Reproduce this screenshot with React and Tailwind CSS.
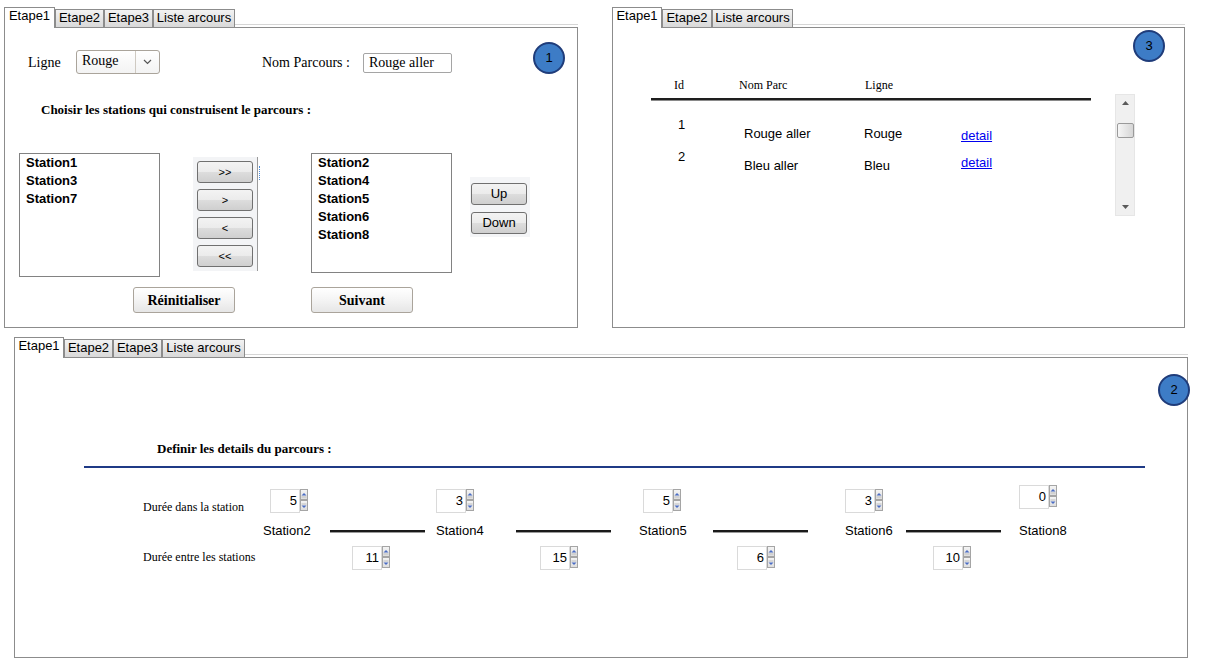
const sans = "font-['Liberation_Sans',Arial,sans-serif]";
const serif = "font-['Liberation_Serif','Times_New_Roman',serif]";
const winBtn =
  "rounded-[3px] border border-[#707070] bg-[linear-gradient(#f3f3f3_0%,#ebebeb_50%,#dddddd_51%,#cfcfcf_100%)] flex items-center justify-center";
const softBtn =
  "rounded-[3px] border border-[#aaa49b] bg-[linear-gradient(#ffffff_0%,#f4f4f4_50%,#e6e6e6_100%)] flex items-center justify-center";

const Tabs = ({ items }) => (
  <div className="flex h-[20px] items-end">
    {items.map((t, i) =>
      i === 0 ? (
        <div
          key={t.label}
          style={{ width: t.w }}
          className="relative z-10 -mb-px h-[21px] border border-b-0 border-[#8c8c8c] bg-white text-center text-[13px] leading-[16px]"
        >
          {t.label}
        </div>
      ) : (
        <div
          key={t.label}
          style={{ width: t.w }}
          className="h-[18px] border border-b-0 border-[#8c8c8c] bg-[linear-gradient(#f2f2f2,#d9d9d9)] text-center text-[13px] leading-[16px]"
        >
          {t.label}
        </div>
      )
    )}
    <div className="mb-[2px] flex-1 border-b border-[#d6d6d6]" />
  </div>
);

const Badge = ({ n, className }) => (
  <div
    className={`absolute flex h-[32px] w-[32px] items-center justify-center rounded-full border-2 border-[#1f3c7a] bg-[#3d7cc6] text-[13px] text-black ${className}`}
  >
    {n}
  </div>
);

const Arrow = ({ up }) => (
  <div className="flex h-[11px] w-[8px] items-center justify-center border border-[#a5a5a5] bg-[linear-gradient(#f4f4f4,#dedede)]">
    <svg width="6" height="6" viewBox="0 0 6 6">
      {up ? (
        <>
          <path d="M0.5 3.5 L3 1 L5.5 3.5 Z" fill="#4a6cc4" />
          <rect x="0.5" y="4.5" width="5" height="1" fill="#c0c0c0" />
        </>
      ) : (
        <>
          <rect x="0.5" y="0.5" width="5" height="1" fill="#c0c0c0" />
          <path d="M0.5 2.5 L5.5 2.5 L3 5 Z" fill="#4a6cc4" />
        </>
      )}
    </svg>
  </div>
);

const Spinner = ({ value, className = "" }) => (
  <div className={`flex h-[24px] ${className}`}>
    <div className="h-[24px] w-[30px] border border-[#dadada] pr-[2px] text-right text-[13px] leading-[22px]">
      {value}
    </div>
    <div className="flex flex-col">
      <Arrow up />
      <Arrow />
    </div>
  </div>
);

const Station = ({ name, className = "" }) => (
  <div className={`w-[48px] whitespace-nowrap text-[13px] leading-[16px] ${className}`}>{name}</div>
);

const Link = ({ className = "" }) => (
  <div className={`w-[34px] ${className}`}>
    <span className="text-[13px] leading-[15px] text-[#0000ee] underline">detail</span>
  </div>
);

const Line = ({ className = "" }) => (
  <div className={`h-[2px] w-[95px] bg-[#1a1a1a] shadow-[0_1px_0_#9a9a9a] ${className}`} />
);

export default function App() {
  return (
    <div className={`h-[667px] w-[1211px] overflow-hidden bg-white text-black ${sans}`}>
      <div className="flex items-start pt-[7px]">
        {/* panel 1 */}
        <div className="ml-[4px] w-[574px]">
          <Tabs
            items={[
              { label: "Etape1", w: 51 },
              { label: "Etape2", w: 49 },
              { label: "Etape3", w: 49 },
              { label: "Liste arcours", w: 82 },
            ]}
          />
          <div className="relative h-[301px] border border-[#8c8c8c]">
            <Badge n="1" className="left-[528px] top-[14px]" />
            <div className="flex items-center pt-[22px]">
              <span className={`ml-[23px] w-[48px] text-[14px] ${serif}`}>Ligne</span>
              <div className="flex h-[24px] w-[84px] rounded-[3px] border border-[#aaa49b] bg-[linear-gradient(#ffffff,#f3f3f3)]">
                <div className={`w-[58px] pl-[5px] text-[14px] leading-[20px] ${serif}`}>Rouge</div>
                <div className="flex flex-1 items-center justify-center border-l border-[#cfcac2]">
                  <svg width="9" height="6" viewBox="0 0 9 6">
                    <path d="M1 1 L4.5 4.5 L8 1" fill="none" stroke="#555" strokeWidth="1.2" />
                  </svg>
                </div>
              </div>
              <span className={`ml-[102px] w-[101px] whitespace-nowrap text-[14px] ${serif}`}>Nom Parcours :</span>
              <div
                className={`mt-[2px] h-[20px] w-[89px] rounded-[2px] border border-[#a5a5a5] pl-[5px] text-[14px] leading-[18px] ${serif}`}
              >
                Rouge aller
              </div>
            </div>
            <div className={`ml-[36px] mt-[28px] text-[13px] font-bold leading-[16px] ${serif}`}>
              Choisir les stations qui construisent le parcours :
            </div>
            <div className="mt-[35px] flex items-start">
              <div className="ml-[14px] h-[124px] w-[141px] border border-[#828282] px-[6px] text-[13px] font-bold leading-[18px]">
                <div>Station1</div>
                <div>Station3</div>
                <div>Station7</div>
              </div>
              <div className="relative ml-[33px] mt-[4px] flex h-[114px] w-[65px] flex-col gap-[6px] border-r border-[#9a9a9a] bg-[#f3f4f6] pl-[4px] pt-[4px]">
                <div className="absolute right-[-3px] top-[9px] h-[14px] w-[2px] border-r border-dotted border-[#4a8ad8]" />
                {[">>", ">", "<", "<<"].map((l) => (
                  <div key={l} className={`h-[22px] w-[56px] text-[11px] ${winBtn}`}>
                    {l}
                  </div>
                ))}
              </div>
              <div className="ml-[53px] h-[120px] w-[141px] border border-[#828282] px-[6px] text-[13px] font-bold leading-[18px]">
                <div>Station2</div>
                <div>Station4</div>
                <div>Station5</div>
                <div>Station6</div>
                <div>Station8</div>
              </div>
              <div className="ml-[18px] mt-[24px] flex h-[60px] w-[60px] flex-col gap-[7px] bg-[#f4f5f7] pl-[1px] pt-[6px]">
                <div className={`h-[22px] w-[56px] text-[13px] ${winBtn}`}>Up</div>
                <div className={`h-[22px] w-[56px] text-[13px] ${winBtn}`}>Down</div>
              </div>
            </div>
            <div className="mt-[10px] flex">
              <div className={`ml-[128px] h-[26px] w-[102px] text-[14px] font-bold ${serif} ${softBtn}`}>
                Réinitialiser
              </div>
              <div className={`ml-[76px] h-[26px] w-[102px] text-[14px] font-bold ${serif} ${softBtn}`}>
                Suivant
              </div>
            </div>
          </div>
        </div>

        {/* panel 3 */}
        <div className="ml-[34px] w-[573px]">
          <Tabs
            items={[
              { label: "Etape1", w: 50 },
              { label: "Etape2", w: 50 },
              { label: "Liste arcours", w: 81 },
            ]}
          />
          <div className="relative h-[301px] border border-[#8c8c8c]">
            <Badge n="3" className="left-[520px] top-[2px]" />
            <div className="flex items-start pt-[50px]">
              <div className="w-[502px]">
                <div className={`flex pl-[61px] text-[12px] leading-[14px] ${serif}`}>
                  <div className="w-[65px]">Id</div>
                  <div className="w-[126px]">Nom Parc</div>
                  <div>Ligne</div>
                </div>
                <div className="ml-[38px] mt-[6px] h-[2px] w-[440px] bg-[#1e1e1e] shadow-[0_1px_0_#8a8a8a]" />
                <div className="mt-[17px] flex items-start text-[13px] leading-[15px]">
                  <div className="w-[131px] pl-[65px]">1</div>
                  <div className="mt-[9px] w-[120px]">Rouge aller</div>
                  <div className="mt-[9px] w-[97px]">Rouge</div>
                  <Link className="mt-[11px]" />
                </div>
                <div className="mt-[6px] flex items-start text-[13px] leading-[15px]">
                  <div className="w-[131px] pl-[65px]">2</div>
                  <div className="mt-[9px] w-[120px]">Bleu aller</div>
                  <div className="mt-[9px] w-[97px]">Bleu</div>
                  <Link className="mt-[6px]" />
                </div>
              </div>
              <div className="mt-[16px] flex h-[122px] w-[20px] flex-col items-center border border-[#e6e6e6] bg-[#f0f0f0]">
                <svg className="mt-[6px]" width="7" height="4" viewBox="0 0 7 4">
                  <path d="M0 4 L3.5 0 L7 4 Z" fill="#5a5a5a" />
                </svg>
                <div className="mt-[18px] h-[15px] w-[17px] rounded-[2px] border border-[#9a9a9a] bg-[linear-gradient(90deg,#f6f6f6,#d6d6d6)]" />
                <div className="flex-1" />
                <svg className="mb-[6px]" width="7" height="4" viewBox="0 0 7 4">
                  <path d="M0 0 L7 0 L3.5 4 Z" fill="#5a5a5a" />
                </svg>
              </div>
            </div>
          </div>
        </div>
      </div>

      {/* panel 2 */}
      <div className="ml-[14px] mt-[9px] w-[1174px]">
        <Tabs
          items={[
            { label: "Etape1", w: 50 },
            { label: "Etape2", w: 49 },
            { label: "Etape3", w: 49 },
            { label: "Liste arcours", w: 83 },
          ]}
        />
        <div className="relative h-[301px] border border-[#8c8c8c]">
          <Badge n="2" className="left-[1143px] top-[16px]" />
          <div className={`pl-[142px] pt-[83px] text-[13px] font-bold leading-[16px] ${serif}`}>
            Definir les details du parcours :
          </div>
          <div className="ml-[69px] mt-[9px] h-[2px] w-[1061px] bg-[#1f3a86]" />
          <div className="mt-[21px] flex items-start">
            <div className={`ml-[128px] mt-[11px] w-[127px] text-[12px] leading-[14px] ${serif}`}>
              Durée dans la station
            </div>
            <Spinner value="5" />
            <Spinner value="3" className="ml-[128px]" />
            <Spinner value="5" className="ml-[169px]" />
            <Spinner value="3" className="ml-[164px]" />
            <Spinner value="0" className="ml-[136px] -mt-[4px]" />
          </div>
          <div className="mt-[9px] flex h-[16px] items-center">
            <Station name="Station2" className="ml-[248px]" />
            <Line className="ml-[19px]" />
            <Station name="Station4" className="ml-[11px]" />
            <Line className="ml-[32px]" />
            <Station name="Station5" className="ml-[28px]" />
            <Line className="ml-[26px]" />
            <Station name="Station6" className="ml-[37px]" />
            <Line className="ml-[13px]" />
            <Station name="Station8" className="ml-[18px]" />
          </div>
          <div className="mt-[7px] flex items-start">
            <div className={`ml-[128px] mt-[4px] w-[209px] text-[12px] leading-[14px] ${serif}`}>
              Durée entre les stations
            </div>
            <Spinner value="11" />
            <Spinner value="15" className="ml-[150px]" />
            <Spinner value="6" className="ml-[159px]" />
            <Spinner value="10" className="ml-[158px]" />
          </div>
        </div>
      </div>
    </div>
  );
}
